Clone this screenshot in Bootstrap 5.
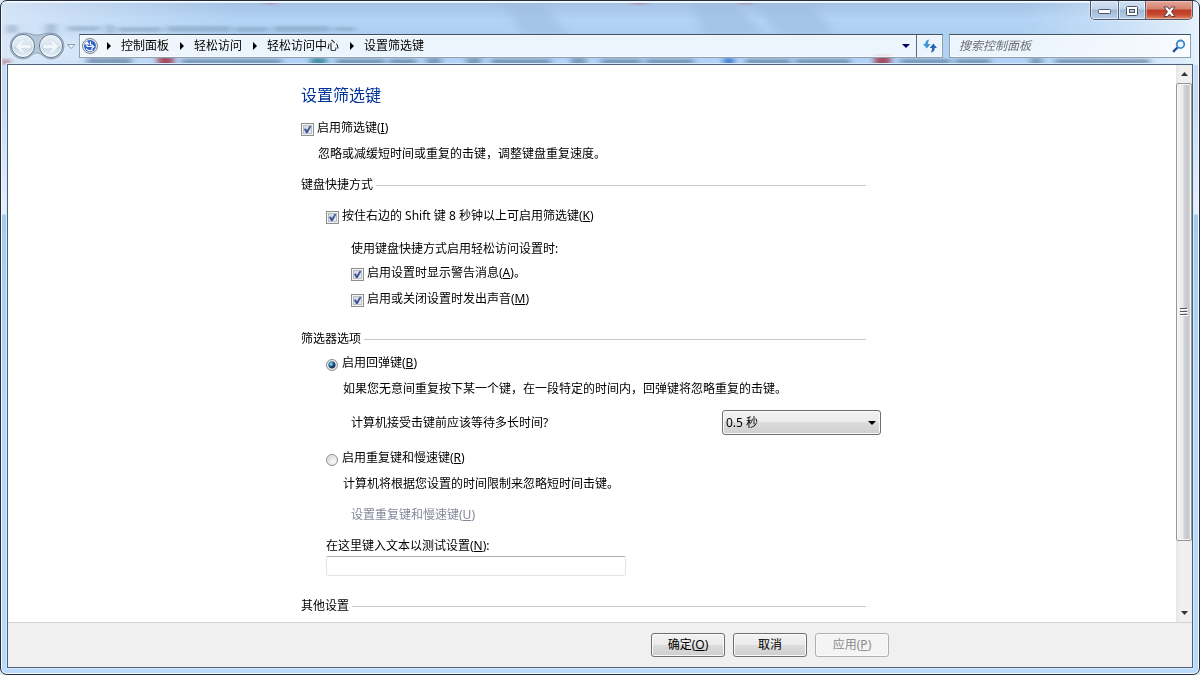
<!DOCTYPE html>
<html lang="zh-CN">
<head>
<meta charset="utf-8">
<meta name="viewport" content="width=device-width, initial-scale=1">
<title>设置筛选键</title>
<link href="https://cdn.jsdelivr.net/npm/bootstrap@5.3.0/dist/css/bootstrap.min.css" rel="stylesheet">
<style>
body{font:12px/16px "Noto Sans","Noto Sans CJK SC",sans-serif;color:#000;background:#dfe6ee}
.aero{height:100vh;border:1px solid #232c3d;border-radius:7px;overflow:hidden;padding:0 6px 6px;
  background:linear-gradient(#cbdaf1 0,#c9daf3 100px,#e6effc 213px,#a6caf0 214px,#b4d7fa 60%,#b9dafa 100%);box-shadow:inset 0 0 0 1px #f4faff}
.glass{left:1px;right:1px;top:1px;height:63px;width:calc(100% - 2px)}
.chrome{height:63px}
.caption{right:6px;top:0;height:19px;border:1px solid #4b5a6e;border-top:0;border-radius:0 0 5px 5px;overflow:hidden;box-shadow:0 0 2px #fff}
.caption button{border:0;padding:0;width:27px;height:18px;display:grid;place-items:center;box-shadow:inset 0 0 0 1px rgba(255,255,255,.55);background:linear-gradient(#d3e2f3 0,#c1d4e9 45%,#9fb8d3 50%,#b9d0ea)}
.caption button+button{border-left:1px solid #566579}
.caption .cap-close{width:47px;background:linear-gradient(#e3a89c 0,#d4806e 45%,#bd3b22 50%,#c44a30 75%,#e08464);box-shadow:inset 0 0 0 1px rgba(255,205,190,.55)}
.caption svg{margin-top:3px}
.navrow{padding:33px 2px 0 0}
.hist{width:72px;height:24px}
.hist svg{overflow:visible}
.field{height:24px;border:1px solid #8fa0b3;border-top-color:#414f60;background:rgba(255,255,255,.76);box-shadow:inset 0 0 0 1px rgba(255,255,255,.65)}
.crumb a{color:#000;text-decoration:none}
.crumb svg{flex:none}
.sep{width:25px}
.sep-root{width:23px}
.refresh{width:26px;height:22px;border:0;border-left:1px solid #5c6a7b;background:none;padding:0;display:grid;place-items:center}
.search{width:242px;padding:0 4px 0 9px;margin-left:6px}
.search input{border:0;outline:0;background:none;font-style:italic;padding:0;min-width:0;line-height:16px}
.search input::placeholder{color:#6b6f75;opacity:1}
.search button{border:0;background:none;padding:0}
.client{border:1px solid #4c6078;background:#fff;min-height:0;box-shadow:0 0 0 1px #d6eafd}
.scroller{min-height:0;scrollbar-width:none}
.scroller::-webkit-scrollbar{display:none}
.sheet{max-width:582px;padding-top:18px}
h1{font-size:16px;line-height:24px;color:#039;margin:0;font-weight:400}
h2{font-size:12px;line-height:16px;margin:0;max-width:565px;gap:3px;font-weight:400}
h2::after{content:"";flex:1;height:1px;background:#c8c8c8}
.g2{margin-top:2px}.g8{margin-top:8px}.g10{margin-top:10px}.g13{margin-top:13px}.g15{margin-top:15px}.g17{margin-top:17px}.g22{margin-top:22px}
.in1{padding-left:25px}
.note{padding-left:17px}
.opt{gap:3px;height:16px}
.opt input{appearance:none;width:13px;height:13px;margin:0;flex:none}
.opt input[type=checkbox]{border:1px solid #8e8f8f;box-shadow:inset 0 0 0 1px #f4f4f4,inset 0 0 0 2px #b9bec6;background:linear-gradient(135deg,#cdd2d8,#f6f6f6)}
.opt input[type=checkbox]:checked{background:url("data:image/svg+xml,%3Csvg xmlns='http://www.w3.org/2000/svg' viewBox='0 0 11 11'%3E%3Cpath d='M2.3 5.2 3.6 4.7 4.9 6.7 8.2 1.6 9 2.2 5.4 9 4.4 9Z' fill='%23344f97' stroke='%23344f97' stroke-width='.6'/%3E%3C/svg%3E"),linear-gradient(135deg,#cdd2d8,#f6f6f6)}
.opt input[type=radio]{width:12px;height:12px;margin-right:1px;border:1px solid #8a8c8e;border-radius:50%;box-shadow:inset 0 0 0 1px #f1f1f1;background:radial-gradient(circle at 65% 65%,#f4f4f4 20%,#bfc3c8)}
.opt input[type=radio]:checked{background:radial-gradient(circle at 4px 4px,#9be2f5 0,#2f86b5 2px,rgba(18,54,90,0) 3px),radial-gradient(circle,#16395e 3px,#d5dade 4px)}
.wait{width:159px;height:25px;margin-right:2px;appearance:none;border:1px solid #707070;border-radius:3px;padding:0 3px;color:#000;box-shadow:inset 0 0 0 1px #fafafa;
  background:url("data:image/svg+xml,%3Csvg xmlns='http://www.w3.org/2000/svg' width='8' height='4'%3E%3Cpath d='M0 0h8L4 4z'/%3E%3C/svg%3E") right 4px center no-repeat,linear-gradient(#f2f2f2 0,#ebebeb 49%,#dcdcdc 50%,#cfcfcf)}
.off-link{color:#838799;text-decoration:none}
.tester{width:300px;height:20px;border:1px solid #e2e3ea;border-top-color:#abadb3;border-radius:2px;padding:0 4px;display:block}
.bar{width:16px;background:linear-gradient(90deg,#e6e6e6,#f1f1f1 30%,#efefef)}
.bar button{border:0;background:none;padding:0;height:18px;display:grid;place-items:center}
.thumb{height:88%;border:1px solid #979797;border-radius:2px;display:grid;place-items:center;background:linear-gradient(90deg,#f5f5f5,#e9e9eb 44%,#d3d4d7 50%,#c6c7cb 75%,#dcdcde);box-shadow:inset 0 0 0 1px #f6f6f6}
.foot{height:45px;background:#f0f0f0;border-top:1px solid #d3d3d3}
.foot-in{width:578px;gap:8px}
.push{width:74px;height:24px;padding:0;font-size:12px;line-height:16px;color:#000;border:1px solid #707070;border-radius:3px;box-shadow:inset 0 0 0 1px #fafafa;background:linear-gradient(#f2f2f2 0,#ebebeb 49%,#dcdcdc 50%,#cfcfcf)}
.push:disabled{color:#8b8b8b;border-color:#adb2b5;background:#f4f4f4;opacity:1}
</style>
</head>
<body>
<div class="aero d-flex flex-column position-relative">
  <svg class="glass position-absolute" viewBox="0 0 1198 63" preserveAspectRatio="none" aria-hidden="true">
    <defs>
      <linearGradient id="sky" x1="0" y1="0" x2="0" y2="1"><stop offset="0" stop-color="#a3c1e3"/><stop offset=".28" stop-color="#b2d3f6"/><stop offset=".5" stop-color="#aed0f0"/><stop offset="1" stop-color="#b3d4f8"/></linearGradient>
      <linearGradient id="pale" x1="0" y1="0" x2="1" y2="0"><stop offset="0" stop-color="#dce8f8" stop-opacity=".85"/><stop offset=".2" stop-color="#d5e4f7" stop-opacity="0"/><stop offset=".85" stop-color="#d5e4f7" stop-opacity="0"/><stop offset="1" stop-color="#e4f0fc"/></linearGradient>
      <filter id="soft" x="-20%" y="-100%" width="140%" height="300%"><feGaussianBlur stdDeviation="4 3"/></filter>
      <filter id="near" x="-20%" y="-100%" width="140%" height="300%"><feGaussianBlur stdDeviation="3 1"/></filter>
    </defs>
    <path fill="url(#sky)" d="M0 0h1198v63H0z"/>
    <g filter="url(#soft)">
      <path fill="#9dbddd" opacity=".6" d="M690 0h45l28 34h-60zM750 0h60l25 34h-55zM500 0h40l28 34h-45z"/>
      <path fill="#d9e8fa" opacity=".8" d="M0 36h80v24H0z"/>
    </g>
    <path fill="url(#pale)" d="M0 0h1198v63H0z"/>
    <g filter="url(#near)">
      <path fill="#6f8aab" opacity=".4" d="M66 24h32v5H66zM104 23h8v8h-8zM116 25h44v5h-44zM165 24h64v6h-64zM233 25h34v5h-34zM272 24h56v6h-56zM332 25h22v4h-22zM5 23h10v8H5zM44 22h10v9H44z"/>
      <path fill="#66819f" opacity=".7" d="M85 56h45v7H85zM180 57h100v5H180zM335 57h48v6h-48zM388 57h27v6h-27zM425 56h15v7h-15zM465 56h15v7h-15zM490 57h60v6h-60zM570 56h15v7h-15zM600 57h40v6h-40zM645 57h48v6h-48zM745 57h45v6h-45zM795 57h55v5h-55zM900 57h50v5h-50zM955 57h35v5h-35zM1030 56h12v7h-12zM1055 57h95v5h-95z"/>
      <path fill="#a33f51" opacity=".9" d="M156 55h16v8h-16zM874 53h16v10h-16z"/>
      <path fill="#b76a7c" opacity=".7" d="M0 57h8v6H0z"/>
      <path fill="#2f7f8e" opacity=".8" d="M309 56h16v7h-16z"/><path fill="#3772cc" opacity=".9" d="M723 56h10v7h-10z"/>
      <path fill="#b76a7c" opacity=".7" d="M630 0h16v2h-16zM738 0h14v2h-14zM262 0h12v2h-12z"/>
    </g>
    <path d="M0 .5h1198" stroke="#e8f3ff"/>
  </svg>

  <div class="caption position-absolute d-flex z-1">
    <button type="button" aria-label="最小化"><svg width="13" height="6"><rect x=".5" y=".5" width="12" height="4" rx="1" fill="#fff" stroke="#4a5468"/></svg></button>
    <button type="button" aria-label="最大化"><svg width="13" height="11"><rect x=".5" y=".5" width="11" height="9" rx="1" fill="#fff" stroke="#4a5468"/><rect x="3.500" y="3.500" width="5" height="3" fill="#b5c8dc" stroke="#4a5468"/></svg></button>
    <button type="button" class="cap-close" aria-label="关闭"><svg width="13" height="12" viewBox="0 0 13 12"><path d="M1 1h3.500l2 2.400L8.500 1H12L8.500 5.700 12 10.500H8.500l-2-2.400-2 2.400H1l3.500-4.800z" fill="#fff" stroke="#5b4250"/></svg></button>
  </div>

  <header class="chrome flex-shrink-0 position-relative z-0">
    <div class="navrow d-flex">
      <div class="hist flex-shrink-0">
        <svg width="72" height="28" viewBox="0 0 72 28" class="d-block" role="img" aria-label="后退和前进">
          <defs><linearGradient id="orb" x1="0" y1="0" x2="0" y2="1"><stop offset="0" stop-color="#e6eff7"/><stop offset=".48" stop-color="#dae6f0"/><stop offset=".52" stop-color="#c3d4e3"/><stop offset="1" stop-color="#e8f4fb"/></linearGradient></defs>
          <path d="M16-1c8 0 9 2 14 2s6-2 14-2a13 13 0 0 1 0 26c-7 0-9-6-14-6s-7 6-14 6a13 13 0 0 1 0-26z" fill="#8fa5b9" fill-opacity=".5" stroke="#71869b" stroke-opacity=".6"/>
          <circle cx="16" cy="12" r="11.500" fill="url(#orb)" stroke="#5d7083"/><circle cx="44" cy="12" r="11.500" fill="url(#orb)" stroke="#5d7083"/>
          <circle cx="16" cy="12" r="10.400" fill="none" stroke="#fff" stroke-opacity=".7"/><circle cx="44" cy="12" r="10.400" fill="none" stroke="#fff" stroke-opacity=".7"/>
          <path d="M8.500 12.500 15 6h3l-3.500 4.500H24v4h-9.500L18 19h-3zM51.500 12.500 45 6h-3l3.500 4.500H36v4h9.500L42 19h3z" fill="#f3f7fa" stroke="#ccd8e2" stroke-width=".6"/>
          <path d="M60.500 10.500H68l-3.700 4z" fill="#eef5fb" stroke="#8298ae" stroke-width=".9"/>
        </svg>
      </div>
      <div class="field d-flex flex-fill align-items-center">
        <nav class="crumb d-flex align-items-center flex-fill text-nowrap" aria-label="地址">
          <svg width="18" height="18" viewBox="0 0 18 18"><circle cx="10" cy="9" r="7.500" fill="#e6e9ee" stroke="#7d858f"/><circle cx="10" cy="9" r="5.900" fill="#2d5fc6"/><path d="M7 4.500v5h5.500M5 7.500 7 5l2 2.500M11.500 7.500l2.300 2.200-2.300 2.200M6.200 11.500a4.200 4.200 0 0 0 6.500 1M10.500 4.500v4" fill="none" stroke="#fff" stroke-width="1.200"/></svg>
          <svg class="sep-root" height="8" viewBox="0 0 23 8"><path d="M9 0v8l4-4z"/></svg>
          <a href="#">控制面板</a><svg class="sep" height="8" viewBox="0 0 25 8"><path d="M11 0v8l4-4z"/></svg>
          <a href="#">轻松访问</a><svg class="sep" height="8" viewBox="0 0 25 8"><path d="M11 0v8l4-4z"/></svg>
          <a href="#">轻松访问中心</a><svg class="sep" height="8" viewBox="0 0 25 8"><path d="M11 0v8l4-4z"/></svg>
          <a href="#" aria-current="page">设置筛选键</a>
          <svg class="ms-auto me-1" width="10" height="4"><path d="M0 0h8L4 4z" fill="#000060"/></svg>
        </nav>
        <button type="button" class="refresh" aria-label="刷新"><svg width="16" height="16" viewBox="0 0 16 16"><path d="M7.500 1.500C4.500 2 3.300 3.500 3.300 6H1l3.800 4.500L8.500 6H6c0-2 .3-3 1.500-4.500z" fill="#3f97d8"/><path d="M8.700 14.700c3-.5 4-2.200 4-4.700H15l-3.700-4.500L7.700 10H10c0 2-.2 3-1.300 4.700z" fill="#2866b0"/></svg></button>
      </div>
      <form class="field search d-flex align-items-center flex-shrink-0" role="search">
        <input type="search" class="flex-fill" placeholder="搜索控制面板" aria-label="搜索控制面板">
        <button type="button" aria-label="搜索"><svg class="d-block" width="14" height="14" viewBox="0 0 14 14"><path d="M6 8 1.800 12.200" stroke="#2350a2" stroke-width="2.400" stroke-linecap="round"/><circle cx="8.500" cy="5.300" r="3.800" fill="#eef7ff" stroke="#3d8ac9" stroke-width="1.800"/></svg></button>
      </form>
    </div>
  </header>

  <main class="client d-flex flex-column flex-fill position-relative">
    <div class="d-flex flex-fill scroller">
      <div class="flex-fill overflow-auto scroller">
        <div class="sheet mx-auto">
          <h1>设置筛选键</h1>
          <div class="opt g13 d-flex align-items-end"><input type="checkbox" id="on" checked><label for="on">启用筛选键(<u>I</u>)</label></div>
          <div class="note g10">忽略或减缓短时间或重复的击键，调整键盘重复速度。</div>

          <h2 class="d-flex align-items-center g15">键盘快捷方式</h2>
          <div class="in1 g15">
            <div class="opt d-flex align-items-end"><input type="checkbox" id="shift" checked><label for="shift">按住右边的 Shift 键 8 秒钟以上可启用筛选键(<u>K</u>)</label></div>
            <div class="in1">
              <div class="g17">使用键盘快捷方式启用轻松访问设置时:</div>
              <div class="opt g8 d-flex align-items-end"><input type="checkbox" id="warn" checked><label for="warn">启用设置时显示警告消息(<u>A</u>)。</label></div>
              <div class="opt g10 d-flex align-items-end"><input type="checkbox" id="sound" checked><label for="sound">启用或关闭设置时发出声音(<u>M</u>)</label></div>
            </div>
          </div>

          <h2 class="d-flex align-items-center mt-4">筛选器选项</h2>
          <div class="in1 g8">
            <div class="opt d-flex align-items-end"><input type="radio" name="mode" id="bounce" checked><label for="bounce">启用回弹键(<u>B</u>)</label></div>
            <div class="note g10">如果您无意间重复按下某一个键，在一段特定的时间内，回弹键将忽略重复的击键。</div>
            <div class="in1 g13 d-flex justify-content-between align-items-center">
              <label for="wait">计算机接受击键前应该等待多长时间?</label>
              <select class="wait" id="wait"><option>0.5 秒</option><option>1 秒</option></select>
            </div>
            <div class="opt g15 d-flex align-items-end"><input type="radio" name="mode" id="slow"><label for="slow">启用重复键和慢速键(<u>R</u>)</label></div>
            <div class="note g10">计算机将根据您设置的时间限制来忽略短时间击键。</div>
            <div class="in1 g15"><a href="#" class="off-link" aria-disabled="true">设置重复键和慢速键(<u>U</u>)</a></div>
            <label for="try" class="d-block g15">在这里键入文本以测试设置(<u>N</u>):</label>
            <input type="text" id="try" class="tester g2">
          </div>

          <h2 class="d-flex align-items-center g22">其他设置</h2>
        </div>
      </div>
      <div class="bar d-flex flex-column flex-shrink-0">
        <button type="button" aria-label="向上滚动"><svg width="7" height="4"><path d="M0 4h7L3.500 0z" fill="#333"/></svg></button>
        <div class="flex-fill">
          <div class="thumb"><svg width="8" height="8"><path d="M0 .5h7M0 3.500h7M0 6.500h7" stroke="#55585c"/><path d="M1 1.500h7M1 4.500h7M1 7.500h7" stroke="#fff"/></svg></div>
        </div>
        <button type="button" aria-label="向下滚动"><svg width="7" height="4"><path d="M0 0h7L3.500 4z" fill="#333"/></svg></button>
      </div>
    </div>
    <footer class="foot flex-shrink-0 d-flex align-items-center">
      <div class="foot-in mx-auto d-flex justify-content-end">
        <button type="button" class="btn push">确定(<u>O</u>)</button>
        <button type="button" class="btn push">取消</button>
        <button type="button" class="btn push" disabled>应用(<u>P</u>)</button>
      </div>
    </footer>
  </main>
</div>
<script src="https://cdn.jsdelivr.net/npm/bootstrap@5.3.0/dist/js/bootstrap.bundle.min.js"></script>
</body>
</html>
